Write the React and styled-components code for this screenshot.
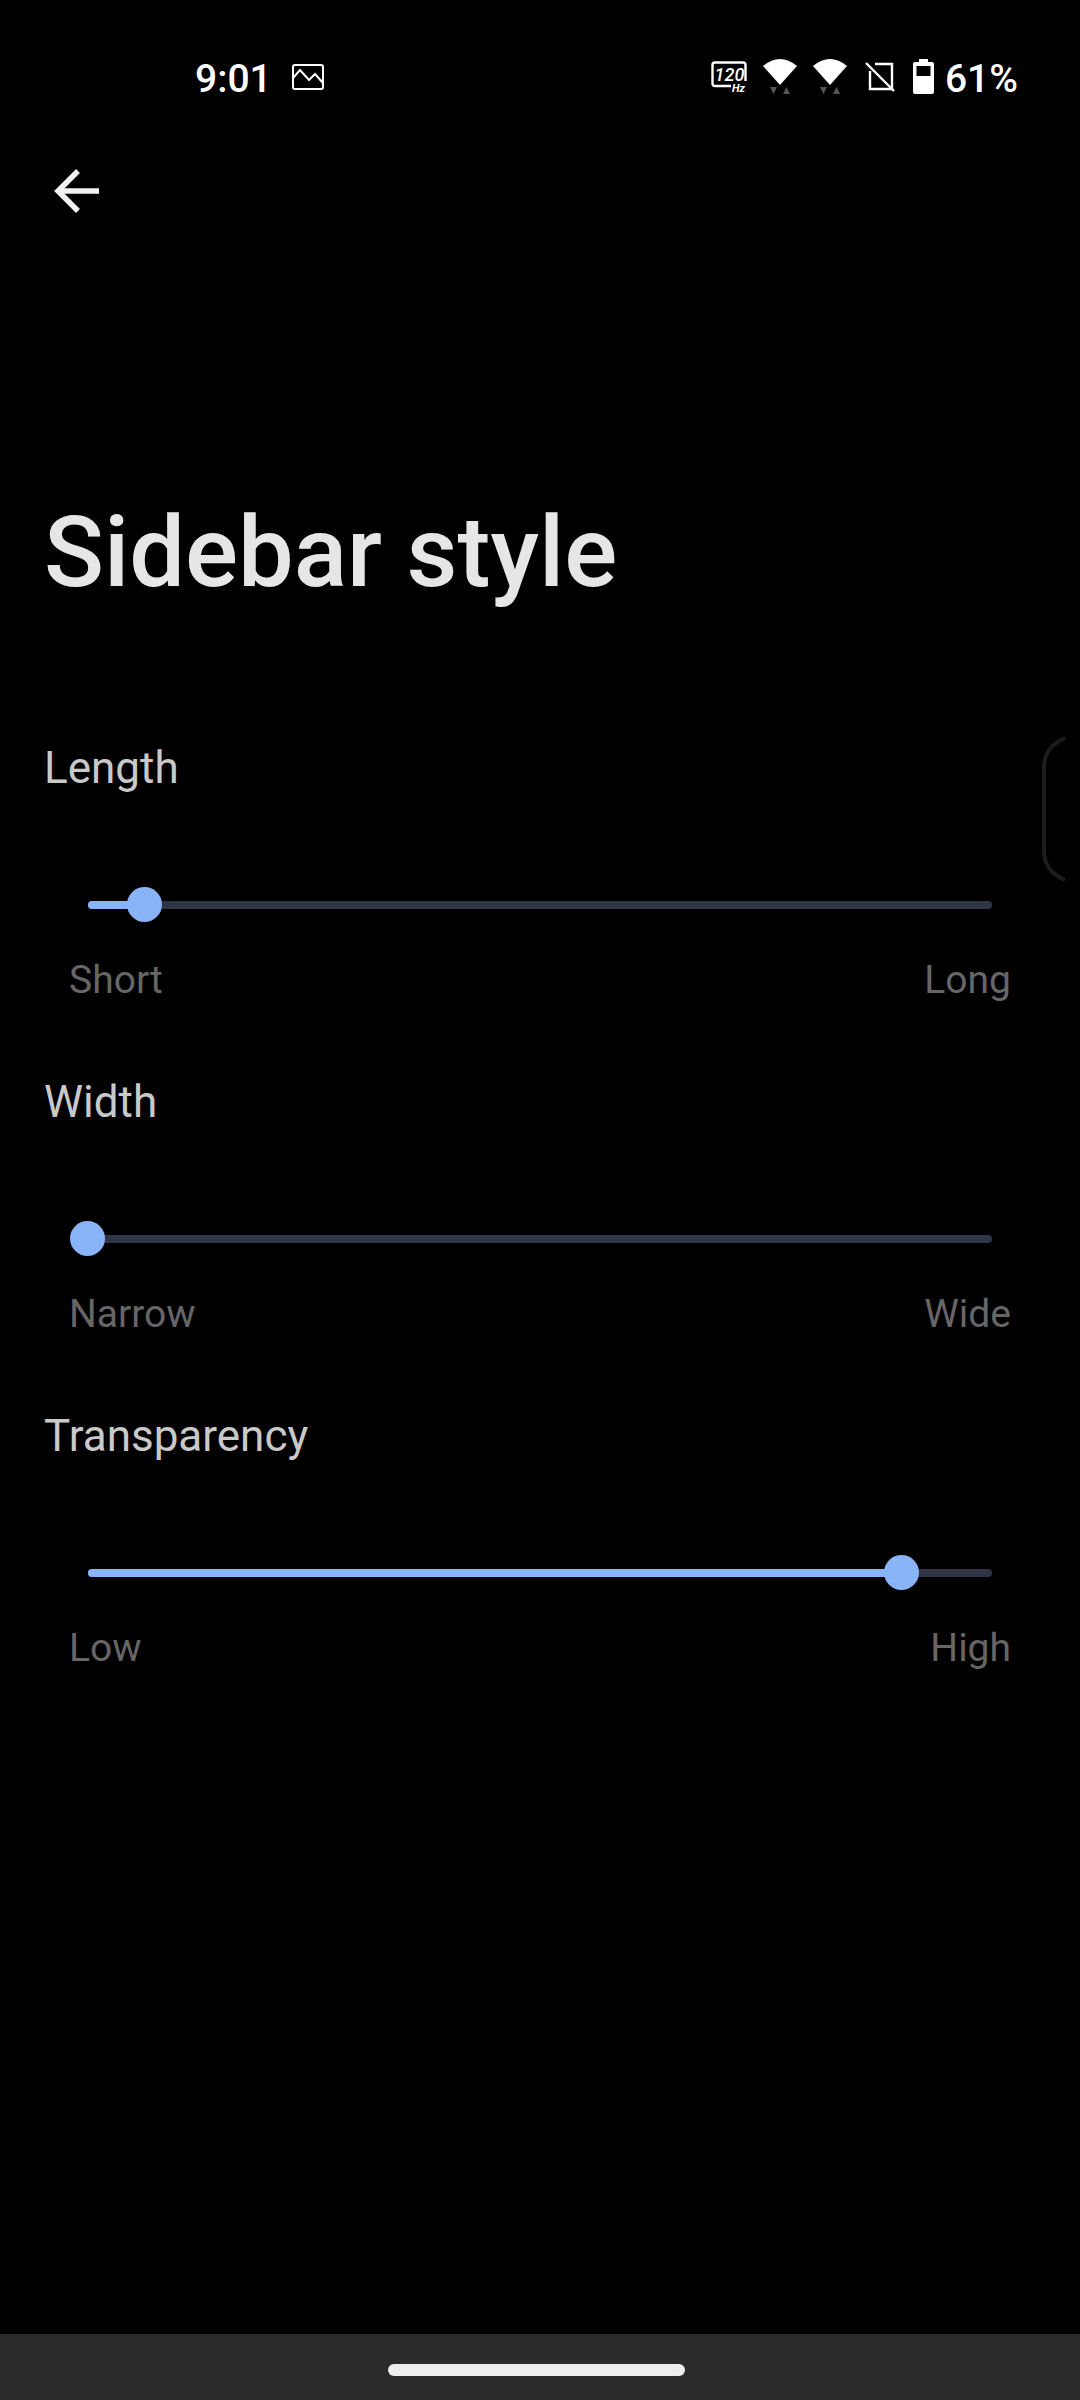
import React from 'react';
import styled, { createGlobalStyle } from 'styled-components';

const GlobalStyle = createGlobalStyle`
    html, body {
        margin: 0;
        padding: 0;
        background: #000;
    }
    * {
        box-sizing: border-box;
    }
`

const Page = styled.div`
    position: relative;
    width: 1080px;
    height: 2400px;
    display: flex;
    flex-direction: column;
    background: #000;
    font-family: Roboto, "Liberation Sans", sans-serif;
    overflow: hidden;
`
const StatusBar = styled.div`
    height: 100px;
    padding: 59px 62px 0 195px;
    display: flex;
    justify-content: space-between;
    align-items: flex-start;
    color: #fff;
`
const StatusGroup = styled.div`
    height: 36px;
    display: flex;
    align-items: center;
    gap: ${props => props.gap}px;
`
const StatusText = styled.span`
    font-size: 39px;
    line-height: 36px;
    font-weight: 500;
    color: #fff;
    margin-top: 3px;
    margin-left: ${props => props.before || 0}px;
    margin-right: ${props => props.after || 0}px;
`
const BackRow = styled.div`
    height: 46px;
    margin-top: 68px;
    padding-left: 54px;
    display: flex;
    align-items: center;
`
const Main = styled.div`
    flex: 1;
    padding: 0 45px;
`
const Title = styled.h1`
    margin: 278px 0 0 -1px;
    font-size: 99px;
    line-height: 120px;
    font-weight: 500;
    color: #e6e6e6;
`
const Section = styled.section`
    height: 334px;
    &:first-of-type {
        margin-top: 130px;
    }
`
const Label = styled.div`
    margin-left: -1px;
    font-size: 44px;
    line-height: 52px;
    color: #c9c9c9;
`
const SliderWrap = styled.div`
    margin: 107px 0 0 43px;
    width: 904px;
    height: 8px;
`
const Track = styled.div`
    position: relative;
    height: 8px;
    border-radius: 4px;
    background: #2f3547;
`
const Fill = styled.div`
    height: 8px;
    border-radius: 4px;
    background: #8ab4f8;
`
const Thumb = styled.div`
    position: absolute;
    top: -14px;
    width: 35px;
    height: 35px;
    margin-left: -18px;
    border-radius: 50%;
    background: #8ab4f8;
`
const Ends = styled.div`
    margin: 48px 0 0 24px;
    width: 942px;
    display: flex;
    justify-content: space-between;
    font-size: 39px;
    line-height: 46px;
    color: #666;
`
const SideHandle = styled.svg`
    position: absolute;
    left: 1040px;
    top: 735px;
`
const NavBar = styled.div`
    height: 66px;
    background: #2b2b2b;
    display: flex;
    justify-content: center;
    padding: 30px 8px 0 0;
`
const NavPill = styled.div`
    width: 297px;
    height: 12px;
    border-radius: 6px;
    background: #eee;
`

const ImageIcon = () => (
    <svg width="32" height="26" viewBox="0 0 32 26" fill="none" stroke="#fff" strokeWidth="2">
        <rect x="1" y="1" width="30" height="24" rx="2" />
        <path d="M1 14L8 6L17 16L23 10L31 19" />
    </svg>
)

const HzIcon = () => (
    <svg width="38" height="34" viewBox="-2 0 38 34">
        <path d="M20 26H4Q1.500 26 1.500 23.500V5Q1.500 2.500 4 2.500H32Q34.500 2.500 34.500 5V21" fill="none" stroke="#fff" strokeWidth="2.400" />
        <text x="18.500" y="21" fontFamily="Roboto" fontSize="18" fontStyle="italic" fontWeight="500" fill="#fff" textAnchor="middle">120</text>
        <text x="21" y="32" fontFamily="Roboto" fontSize="11" fontStyle="italic" fontWeight="700" fill="#fff">Hz</text>
    </svg>
)

const WifiIcon = () => (
    <svg width="34" height="36" viewBox="0 0 34 36">
        <path d="M0 7Q17 -7 34 7L17 26Z" fill="#fff" />
        <path d="M7 28H14L10.500 35Z" fill="#555" />
        <path d="M20 35H27L23.500 28Z" fill="#555" />
    </svg>
)

const SimOffIcon = () => (
    <svg width="34" height="30" viewBox="0 0 34 30" fill="none" stroke="#fff" strokeWidth="2.400">
        <path d="M12 2H29V27H7V9" />
        <path d="M3 1L31 29" />
    </svg>
)

const BatteryIcon = () => (
    <svg width="21" height="37" viewBox="0 0 21 37">
        <path d="M6 0H15V3H19Q21 3 21 5V33Q21 35 19 35H2Q0 35 0 33V5Q0 3 2 3H6Z" fill="#fff" />
        <rect x="3.500" y="7" width="14" height="10" fill="#000" />
    </svg>
)

const BackIcon = () => (
    <svg width="46" height="46" viewBox="0 0 46 46" fill="none" stroke="#f2f2f2" strokeWidth="5.500">
        <path d="M45 23H4" />
        <path d="M24 3L4 23L24 43" />
    </svg>
)

const sections = [
    { label: 'Length', value: 6.3, low: 'Short', high: 'Long' },
    { label: 'Width', value: 0, low: 'Narrow', high: 'Wide' },
    { label: 'Transparency', value: 90, low: 'Low', high: 'High' },
]

const App = () => {
    return (
        <Page>
            <GlobalStyle />
            <StatusBar>
                <StatusGroup gap={0}>
                    <StatusText after={20}>9:01</StatusText>
                    <ImageIcon />
                </StatusGroup>
                <StatusGroup gap={16}>
                    <HzIcon />
                    <WifiIcon />
                    <WifiIcon />
                    <SimOffIcon />
                    <BatteryIcon />
                    <StatusText before={-5}>61%</StatusText>
                </StatusGroup>
            </StatusBar>
            <BackRow><BackIcon /></BackRow>
            <Main>
                <Title>Sidebar style</Title>
                {sections.map(s => (
                    <Section key={s.label}>
                        <Label>{s.label}</Label>
                        <SliderWrap>
                            <Track>
                                <Fill style={{ width: `${s.value}%` }} />
                                <Thumb style={{ left: `${s.value}%` }} />
                            </Track>
                        </SliderWrap>
                        <Ends>
                            <span>{s.low}</span>
                            <span>{s.high}</span>
                        </Ends>
                    </Section>
                ))}
            </Main>
            <SideHandle width="28" height="148" viewBox="0 0 28 148" fill="none" stroke="#1c1c1c" strokeWidth="4">
                <path d="M25 3Q4 12 4 32V116Q4 136 25 145" />
            </SideHandle>
            <NavBar><NavPill /></NavBar>
        </Page>
    )
}

export default App
